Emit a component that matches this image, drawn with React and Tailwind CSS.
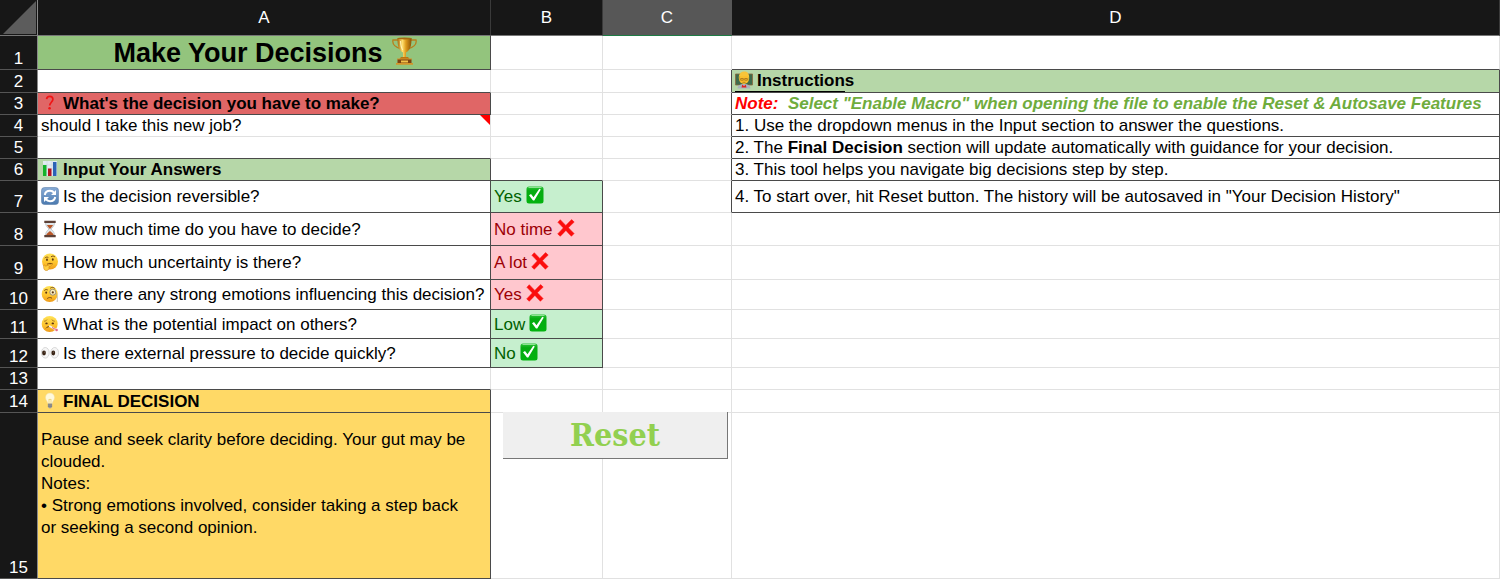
import React from "react";
import clsx from "clsx";

function Icon({ children, className = "size-[18px]" }) {
  return (
    <svg viewBox="0 0 18 18" className={clsx("shrink-0", className)} aria-hidden="true">
      {children}
    </svg>
  );
}

function FaceGradient({ id }) {
  return (
    <defs>
      <linearGradient id={id} x1="0" y1="0" x2="0" y2="1">
        <stop offset="0" stopColor="#ffe257" />
        <stop offset="0.6" stopColor="#fdc22c" />
        <stop offset="1" stopColor="#ee9a1a" />
      </linearGradient>
    </defs>
  );
}

function Trophy() {
  return (
    <svg viewBox="0 0 27 28" className="h-7 w-[27px] shrink-0" aria-hidden="true">
      <defs>
        <linearGradient id="gold" x1="0" x2="1">
          <stop offset="0" stopColor="#a8690c" />
          <stop offset="0.35" stopColor="#ffdf6e" />
          <stop offset="0.6" stopColor="#dd9a1c" />
          <stop offset="1" stopColor="#8a5208" />
        </linearGradient>
      </defs>
      <path d="M7 3H2c-1 4 2 7 8 9M20 3h5c1 4-2 7-8 9" fill="none" stroke="#b87f1c" strokeWidth="1.3" />
      <path d="M6.500 1h14c0 8-1 12-5.500 14.500v5.500h-3v-5.500C7.500 13 6.500 9 6.500 1z" fill="url(#gold)" />
      <ellipse cx="13.500" cy="1.400" rx="7" ry="1" fill="#a66a10" />
      <path d="M9.500 4c.2 4 .8 7 2.300 9" fill="none" stroke="#fff0b0" strokeWidth="1.200" />
      <path d="M10 20h7l1.500 2h-10z" fill="#b87413" />
      <path d="M6.500 22h14v5h-14z" fill="#7c4310" />
      <path d="M5 26h17v1.700H5zM6 21.400h15v1.200H6z" fill="#d4952a" />
      <path d="M10 23.500h7v2h-7z" fill="#f2c24a" />
    </svg>
  );
}

function Question() {
  return (
    <Icon>
      <path d="M5.600 5.200C5.800 3 7.200 2.300 8.700 2.300c2 0 3.200 1.200 3.200 3 0 2.700-3.200 3.200-3.200 6.200" fill="none" stroke="#f01414" strokeWidth="1.700" />
      <circle cx="8.600" cy="14.300" r="1.300" fill="#f01414" />
    </Icon>
  );
}

function BarChart() {
  return (
    <Icon>
      <path d="M2 1h14v15H2z" fill="#e3ebf2" />
      <path d="M2 5h14M2 9h14M2 13h14M6 1v15M11 1v15" stroke="#c3d0dc" strokeWidth="0.500" />
      <path d="M2 5h3.500v11H2z" fill="#12b32a" />
      <path d="M7 8.500h3.500V16H7z" fill="#b5121f" />
      <path d="M12 2h3.500v14H12z" fill="#2b63b5" />
    </Icon>
  );
}

function Refresh() {
  return (
    <Icon>
      <defs>
        <linearGradient id="tile" x1="0" y1="0" x2="0" y2="1">
          <stop offset="0" stopColor="#87abd6" />
          <stop offset="1" stopColor="#4b7aaf" />
        </linearGradient>
      </defs>
      <rect x="0.500" y="0.500" width="17" height="17" rx="3" fill="url(#tile)" stroke="#5b80ab" strokeWidth="0.600" />
      <path d="M3.800 8C4.200 5.300 6.300 3.800 9 3.800c1.800 0 3.200.7 4.200 2M14.200 10c-.4 2.700-2.500 4.200-5.200 4.200-1.800 0-3.200-.7-4.200-2" fill="none" stroke="#fff" strokeWidth="2" />
      <path d="M15 3v5h-5zM3 15v-5h5z" fill="#fff" />
    </Icon>
  );
}

function Hourglass() {
  return (
    <Icon>
      <path d="M4.500 2.500h9c0 3.500-1.500 4.500-3.500 6.500 2 2 3.500 3 3.500 6.500h-9c0-3.500 1.500-4.500 3.500-6.500-2-2-3.500-3-3.500-6.500z" fill="#dfe6ea" stroke="#a9b2b8" strokeWidth="0.600" />
      <path d="M6 5h6c-.5 1.600-1.700 2.600-3 4-1.300-1.400-2.500-2.400-3-4zM5.200 15.300c.3-2 2.300-2.800 3.800-4.300 1.500 1.500 3.500 2.300 3.800 4.300z" fill="#b9582a" />
      <path d="M3.300.7h11.400v2.200H3.300zM3.300 15.100h11.400v2.200H3.300z" fill="#5d4036" />
    </Icon>
  );
}

function Thinking() {
  return (
    <Icon>
      <FaceGradient id="thinking" />
      <circle cx="9" cy="8.500" r="8" fill="url(#thinking)" />
      <ellipse cx="6" cy="6.800" rx="0.900" ry="1.300" fill="#5b3411" />
      <ellipse cx="11.800" cy="6.500" rx="0.900" ry="1.300" fill="#5b3411" />
      <path d="M4 4.800c.8-.8 2-.9 3-.5M10.300 3.600c1-.9 2.500-.8 3.400.1M6.500 11c1.500-.8 3.300-.8 4.800-.2" fill="none" stroke="#6e4012" strokeWidth="0.900" strokeLinecap="round" />
      <path d="M2.800 12.200c.8-.6 1.400.3 1.700 1l4.800-1.600c1.200-.3 1.500 1 .5 1.400l-2 .8c1 1.600-.2 3.700-2.200 3.700-2.200 0-3.300-1.500-2.800-5.300z" fill="#ffcf43" stroke="#cf8616" strokeWidth="0.600" />
    </Icon>
  );
}

function Monocle() {
  return (
    <Icon>
      <FaceGradient id="monocle" />
      <circle cx="8.700" cy="9" r="8" fill="url(#monocle)" />
      <ellipse cx="5.200" cy="7.600" rx="0.900" ry="1.200" fill="#5b3411" />
      <circle cx="11.800" cy="7.200" r="3" fill="#fdf0bd" stroke="#8e877a" strokeWidth="0.900" />
      <circle cx="11.800" cy="7.400" r="1.100" fill="#5b3411" />
      <path d="M14.800 8c1.600 2 1.800 5 1.400 9" fill="none" stroke="#aaa39a" strokeWidth="0.700" />
      <path d="M3.500 5.300c.8-.8 1.900-1 2.900-.5M9.500 3c1.200-1 3-.9 4 .1M6.500 13.300c1.200-1 3-1.100 4.200-.3" fill="none" stroke="#6e4012" strokeWidth="0.900" strokeLinecap="round" />
    </Icon>
  );
}

function Thermometer() {
  return (
    <Icon>
      <FaceGradient id="sick" />
      <circle cx="8.700" cy="9" r="8" fill="url(#sick)" />
      <path d="M3.500 6.200c1-.1 1.800-.5 2.300-1.200M11 5c.6.700 1.400 1.100 2.400 1.200" fill="none" stroke="#8a5516" strokeWidth="0.700" strokeLinecap="round" />
      <ellipse cx="5.500" cy="8.400" rx="1.200" ry="0.900" fill="#5b3411" />
      <ellipse cx="11.800" cy="8.400" rx="1.200" ry="0.900" fill="#5b3411" />
      <path d="M5.200 13c1-1.300 2.500-1.700 4.300-1.300" fill="none" stroke="#5b3411" strokeWidth="0.900" strokeLinecap="round" />
      <path d="M8.800 11.300l6.200 3.400" stroke="#f4f4f4" strokeWidth="1.800" strokeLinecap="round" />
      <path d="M11 12.500l3.500 1.900" stroke="#e2365c" strokeWidth="0.800" />
      <circle cx="15.600" cy="15" r="1.300" fill="#e46a8c" />
    </Icon>
  );
}

function Eyes() {
  return (
    <Icon>
      <ellipse cx="4.300" cy="8.800" rx="3.900" ry="5.300" fill="#f6f6f6" stroke="#c9c9c9" strokeWidth="0.700" />
      <ellipse cx="13.700" cy="8.800" rx="3.900" ry="5.300" fill="#f6f6f6" stroke="#c9c9c9" strokeWidth="0.700" />
      <ellipse cx="3" cy="9" rx="1.900" ry="2.400" fill="#3a2415" />
      <ellipse cx="12.300" cy="9" rx="1.900" ry="2.400" fill="#3a2415" />
      <circle cx="3.200" cy="8.100" r="0.300" fill="#fff" />
      <circle cx="12.500" cy="8.100" r="0.300" fill="#fff" />
    </Icon>
  );
}

function Bulb() {
  return (
    <Icon>
      <path d="M9 1c2.700 0 4.500 2 4.500 4.500 0 2.600-2 3.700-2.300 6H6.800c-.3-2.300-2.300-3.400-2.300-6C4.500 3 6.300 1 9 1z" fill="#fff9dc" stroke="#f0dfa0" strokeWidth="0.500" />
      <path d="M8 11V7l1 .8 1-.8v4" fill="none" stroke="#e8c75c" strokeWidth="0.600" />
      <path d="M6.900 11.500h4.200v3.300l-1.100 1.500H8l-1.100-1.500z" fill="#9a9a9a" />
      <path d="M6.900 12.900h4.200M6.900 14.300h4.200" stroke="#666" strokeWidth="0.500" />
    </Icon>
  );
}

function Teacher() {
  return (
    <Icon>
      <path d="M.5 3h17v11H.5z" fill="#3f6b4c" stroke="#8b6a3e" strokeWidth="0.800" />
      <path d="M2.500 17.500c0-3 2.500-4.500 6.500-4.500s6.500 1.500 6.500 4.500z" fill="#a9b2bd" />
      <path d="M7.300 13.500L9 15.200l1.700-1.700.8 3H6.500z" fill="#e02020" />
      <circle cx="9" cy="8" r="4.900" fill="#fbbf2d" />
      <path d="M3.900 8C3.300 3 5.800.5 9.300.5S14.700 3 14.100 8c-.7-1.800-1.600-2.900-3-3.300-2 .8-5.600.4-6.300.5C4.400 6 4.100 7 3.900 8z" fill="#f8c53a" />
      <path d="M5.700 7.500h2.600v1.700H5.700zM9.700 7.500h2.600v1.700H9.700zM7.500 11.300h3" fill="none" stroke="#8a5a18" strokeWidth="0.600" />
    </Icon>
  );
}

function Check() {
  return (
    <Icon>
      <defs>
        <linearGradient id="check" x1="0" y1="0" x2="0" y2="1">
          <stop offset="0" stopColor="#2fc53c" />
          <stop offset="0.250" stopColor="#06ab12" />
          <stop offset="1" stopColor="#02b30e" />
        </linearGradient>
      </defs>
      <rect x="0.500" y="0.500" width="17" height="17" rx="2.500" fill="url(#check)" />
      <path d="M2.500 1.500h13" stroke="#a7eaa9" strokeWidth="0.800" />
      <path d="M3 9.300l2-1.200 2.500 3.200L13.300 2.700l1.500.8-6.500 11H7z" fill="#fff" />
    </Icon>
  );
}

function Cross() {
  return (
    <Icon>
      <path d="M3.300.7c2 2 3.700 3.900 5.500 5.700C10.700 4.500 12.600 2.500 14.600.6l2.600 2.500c-2 1.900-3.900 3.700-5.800 5.600 1.900 2 3.800 4 5.700 5.900l-2.700 2.700c-1.900-1.900-3.700-3.900-5.500-5.900-1.900 1.900-3.700 3.900-5.600 5.900L.7 14.900c1.900-2 3.800-4 5.600-6-1.800-1.900-3.600-3.700-5.400-5.600z" fill="#fb0d0d" stroke="#fb0d0d" strokeWidth="0.500" />
    </Icon>
  );
}

// Cell edges: each cell owns its right and bottom line
const LINE = {
  none: "border-r-[#e1e1e1] border-b-[#e1e1e1]",
  bottom: "border-r-[#e1e1e1] border-b-[#4a4a4a]",
  right: "border-r-[#4a4a4a] border-b-[#e1e1e1]",
  both: "border-r-[#4a4a4a] border-b-[#4a4a4a]",
};

function Cell({ line = "none", className, children }) {
  return (
    <td className={clsx("border-r border-b pt-px pr-0 pb-0 pl-[3px]", LINE[line], className)}>
      {children}
    </td>
  );
}

function Row({ number, height, children }) {
  return (
    <tr className={height}>
      <th
        scope="row"
        className="border-r border-b border-r-[#8a8a8a] border-b-[#555] bg-[#171717] p-0 text-center align-bottom font-normal text-white"
      >
        {number}
      </th>
      {children}
    </tr>
  );
}

function Label({ icon, children }) {
  return (
    <div className="flex items-center gap-1 whitespace-nowrap">
      <span className="mb-0.5">{icon}</span>
      <span>{children}</span>
    </div>
  );
}

function Answer({ good, children }) {
  return (
    <Cell line="both" className={good ? "bg-[#c6efce] text-[#006100]" : "bg-[#ffc7ce] text-[#9c0006]"}>
      <div className="flex items-center gap-1 whitespace-nowrap">
        <span>{children}</span>
        <span className="mb-1">{good ? <Check /> : <Cross />}</span>
      </div>
    </Cell>
  );
}

const questions = [
  { number: 8, height: "h-[33px]", icon: <Hourglass />, text: "How much time do you have to decide?", answer: "No time", good: false },
  { number: 9, height: "h-[34px]", icon: <Thinking />, text: "How much uncertainty is there?", answer: "A lot", good: false },
  { number: 10, height: "h-[30px]", icon: <Monocle />, text: "Are there any strong emotions influencing this decision?", answer: "Yes", good: false },
  { number: 11, height: "h-[29px]", icon: <Thermometer />, text: "What is the potential impact on others?", answer: "Low", good: true },
  { number: 12, height: "h-[29px]", icon: <Eyes />, text: "Is there external pressure to decide quickly?", answer: "No", good: true },
];

export default function App() {
  const head = "border-r border-b border-r-[#3a3a3a] border-b-[#777] bg-[#171717] p-0 font-normal";
  return (
    <main className="bg-white font-['Liberation_Sans',Arial,sans-serif] text-[17px] leading-5 text-black">
      <table className="w-full min-w-[1480px] table-fixed border-separate border-spacing-0">
        <colgroup>
          <col className="w-[38px]" />
          <col className="w-[453px]" />
          <col className="w-[112px]" />
          <col className="w-[129px]" />
          <col />
        </colgroup>
        <thead>
          <tr className="h-9 text-white">
            <td className="border-r border-b border-r-[#8a8a8a] border-b-[#777] bg-[#171717] p-0 align-bottom">
              <svg viewBox="0 0 37 35" className="block h-[35px] w-full" aria-hidden="true">
                <path d="M3 34L36 1v33z" fill="#5c5c5c" />
              </svg>
            </td>
            <th scope="col" className={head}>A</th>
            <th scope="col" className={head}>B</th>
            <th scope="col" className="border-r border-b border-r-[#575757] border-b-[#1e7b45] bg-[#575757] p-0 font-normal">C</th>
            <th scope="col" className={head}>D</th>
          </tr>
        </thead>
        <tbody>
          <Row number="1" height="h-[34px]">
            <Cell line="both" className="bg-[#93c47d]">
              <div className="flex items-start justify-center gap-2 text-[27px] leading-8 font-bold">
                <h1>Make Your Decisions</h1>
                <Trophy />
              </div>
            </Cell>
            <Cell />
            <Cell />
            <Cell line="bottom" />
          </Row>
          <Row number="2" height="h-[23px]">
            <Cell line="bottom" />
            <Cell />
            <Cell line="right" />
            <Cell line="both" className="bg-[#b6d7a8]">
              <h2 className="flex font-bold">
                <span className="flex gap-1 border-b border-black">
                  <Teacher />
                  <span>Instruction</span>
                </span>
                <span>s</span>
              </h2>
            </Cell>
          </Row>
          <Row number="3" height="h-[22px]">
            <Cell line="both" className="bg-[#e06666] font-bold">
              <Label icon={<Question />}>What's the decision you have to make?</Label>
            </Cell>
            <Cell />
            <Cell line="right" />
            <Cell line="both" className="font-bold whitespace-pre italic">
              <span className="text-[#ff0000]">Note:  </span>
              <span className="text-[#6fac3d]">Select "Enable Macro" when opening the file to enable the Reset &amp; Autosave Features</span>
            </Cell>
          </Row>
          <Row number="4" height="h-[22px]">
            <Cell className="relative">
              should I take this new job?
              <svg viewBox="0 0 10 10" className="absolute top-0 right-0 size-2.5" aria-hidden="true">
                <path d="M0 0h10v10z" fill="#ff0000" />
              </svg>
            </Cell>
            <Cell />
            <Cell line="right" />
            <Cell line="both">1. Use the dropdown menus in the Input section to answer the questions.</Cell>
          </Row>
          <Row number="5" height="h-[22px]">
            <Cell line="bottom" />
            <Cell />
            <Cell line="right" />
            <Cell line="both">
              2. The <b>Final Decision</b> section will update automatically with guidance for your decision.
            </Cell>
          </Row>
          <Row number="6" height="h-[22px]">
            <Cell line="both" className="bg-[#b6d7a8] font-bold">
              <Label icon={<BarChart />}>Input Your Answers</Label>
            </Cell>
            <Cell line="bottom" />
            <Cell line="right" />
            <Cell line="both">3. This tool helps you navigate big decisions step by step.</Cell>
          </Row>
          <Row number="7" height="h-8">
            <Cell line="both">
              <Label icon={<Refresh />}>Is the decision reversible?</Label>
            </Cell>
            <Answer good>Yes</Answer>
            <Cell line="right" />
            <Cell line="both">4. To start over, hit Reset button. The history will be autosaved in "Your Decision History"</Cell>
          </Row>
          {questions.map((q) => (
            <Row key={q.number} number={q.number} height={q.height}>
              <Cell line="both">
                <Label icon={q.icon}>{q.text}</Label>
              </Cell>
              <Answer good={q.good}>{q.answer}</Answer>
              <Cell />
              <Cell />
            </Row>
          ))}
          <Row number="13" height="h-[22px]">
            <Cell line="bottom" />
            <Cell />
            <Cell />
            <Cell />
          </Row>
          <Row number="14" height="h-[23px]">
            <Cell line="both" className="bg-[#ffd966] font-bold">
              <Label icon={<Bulb />}>FINAL DECISION</Label>
            </Cell>
            <Cell />
            <Cell />
            <Cell />
          </Row>
          <Row number="15" height="h-[166px]">
            <Cell line="both" className="bg-[#ffd966]">
              <div className="pr-4 pb-6 leading-[22px]">
                <p>Pause and seek clarity before deciding. Your gut may be clouded.</p>
                <p>Notes:</p>
                <p>• Strong emotions involved, consider taking a step back or seeking a second opinion.</p>
              </div>
            </Cell>
            <Cell className="relative">
              {/* floats over columns B and C */}
              <button
                type="button"
                className="absolute -top-px left-3 h-[47px] w-[225px] border-r border-b border-[#777] bg-[#efefef] font-['DejaVu_Serif_Condensed','DejaVu_Serif',serif] text-[32px] leading-10 font-bold text-[#92d050]"
              >
                Reset
              </button>
            </Cell>
            <Cell />
            <Cell />
          </Row>
        </tbody>
      </table>
    </main>
  );
}
